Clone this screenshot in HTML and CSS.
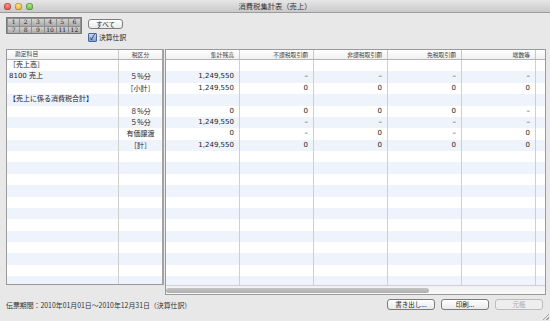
FILE: index.html
```html
<!DOCTYPE html>
<html lang="ja">

<head>
    <meta charset="UTF-8">
    <meta name="viewport" content="width=device-width, initial-scale=1.0">
    <title>消費税集計表（売上）</title>
    <link rel="stylesheet" href="styles.css">
</head>

<body>
    <div class="window">
        <div class="titlebar">
            <div class="lights">
                <span class="light red"></span>
                <span class="light yellow"></span>
                <span class="light green"></span>
            </div>
            <div class="title">消費税集計表（売上）</div>
        </div>

        <div class="toolbar">
            <div class="months">
                <span>1</span><span>2</span><span>3</span><span>4</span><span>5</span><span>6</span>
                <span>7</span><span>8</span><span>9</span><span>10</span><span>11</span><span>12</span>
            </div>
            <div class="side">
                <button class="btn small">すべて</button>
                <label class="check"><span class="box">✓</span>決算仕訳</label>
            </div>
        </div>

        <div class="tables">
            <div class="table left">
                <div class="head">
                    <div class="c account hl">勘定科目</div>
                    <div class="c tax center">税区分</div>
                </div>
                <div class="body" id="leftBody"></div>
            </div>
            <div class="table right">
                <div class="head">
                    <div class="c num">集計残高</div>
                    <div class="c num">不課税取引額</div>
                    <div class="c num">非課税取引額</div>
                    <div class="c num">免税取引額</div>
                    <div class="c num">端数等</div>
                    <div class="c filler"></div>
                </div>
                <div class="body" id="rightBody"></div>
                <div class="hscroll"><div class="thumb"></div></div>
            </div>
        </div>

        <div class="footer">
            <div class="period">伝票期間：2010年01月01日〜2010年12月31日（決算仕訳）</div>
            <div class="buttons">
                <button class="btn">書き出し...</button>
                <button class="btn">印刷...</button>
                <button class="btn disabled">元帳</button>
            </div>
        </div>
        <div class="grip"></div>
    </div>

    <script>
        var rows = [
            ['［売上高］', '', '', '', '', '', ''],
            ['8100 売上', '５%分', '1,249,550', '–', '–', '–', '–'],
            ['', '［小計］', '1,249,550', '0', '0', '0', '0'],
            ['【売上に係る消費税合計】', '', '', '', '', '', ''],
            ['', '８%分', '0', '0', '0', '0', '–'],
            ['', '５%分', '1,249,550', '–', '–', '–', '–'],
            ['', '有価譲渡', '0', '–', '0', '–', '0'],
            ['', '［計］', '1,249,550', '0', '0', '0', '0']
        ];

        var leftHTML = '';
        var rightHTML = '';
        for (var i = 0; i < 20; i++) {
            var r = rows[i] || ['', '', '', '', '', '', ''];
            var cls = i % 2 ? 'row odd' : 'row';
            leftHTML += `<div class="${cls}"><div class="c account">${r[0]}</div><div class="c tax center">${r[1]}</div></div>`;
            rightHTML += `<div class="${cls}">`;
            for (var j = 2; j < 7; j++) {
                rightHTML += `<div class="c num">${r[j]}</div>`;
            }
            rightHTML += `<div class="c filler"></div></div>`;
        }
        document.getElementById('leftBody').innerHTML = leftHTML;
        document.getElementById('rightBody').innerHTML = rightHTML;
    </script>
</body>

</html>
```

FILE: styles.css
```css
body {
    margin: 0;
    padding: 0;
    font-family: "DejaVu Sans", "Noto Sans CJK JP", sans-serif;
    color: #222;
}

.window {
    width: 550px;
    height: 321px;
    background-color: #e8e8e8;
    position: relative;
    overflow: hidden;
}

.titlebar {
    height: 12px;
    background: linear-gradient(#e6e6e6, #c9c9c9);
    border-bottom: 1px solid #9c9c9c;
    display: flex;
    align-items: center;
    position: relative;
}

.lights {
    display: flex;
    gap: 4px;
    padding-left: 4px;
}

.light {
    width: 7px;
    height: 7px;
    border-radius: 50%;
    box-shadow: inset 0 0 0 0.5px rgba(0, 0, 0, 0.35);
}

.red {
    background: radial-gradient(circle at 50% 35%, #ff8f86, #d6382c);
}

.yellow {
    background: radial-gradient(circle at 50% 35%, #ffe28a, #d8a11b);
}

.green {
    background: radial-gradient(circle at 50% 35%, #a9e98b, #4ea62f);
}

.title {
    position: absolute;
    left: 0;
    right: 0;
    text-align: center;
    font-family: "Noto Sans CJK JP", sans-serif;
    font-size: 7.3px;
    color: #333;
    line-height: 12px;
}

.toolbar {
    display: flex;
    gap: 6px;
    padding: 4px 0 0 6px;
    height: 30px;
}

.months {
    display: grid;
    grid-template-columns: repeat(6, 1fr);
    grid-template-rows: 1fr 1fr;
    width: 76px;
    height: 17px;
    padding: 1px;
    box-sizing: border-box;
    border: 1px solid #7a7a7a;
    background: #8e8e8e;
    gap: 1px;
}

.months span {
    background: linear-gradient(#d2d2d2, #aaaaaa);
    font-size: 6px;
    line-height: 6.5px;
    text-align: center;
    color: #222;
    font-family: "DejaVu Serif", serif;
}

.side {
    display: flex;
    flex-direction: column;
    gap: 3px;
    padding-top: 2px;
}

.btn {
    font-family: "Noto Sans CJK JP", sans-serif;
    font-size: 6.5px;
    height: 11px;
    width: 48px;
    padding: 0;
    border: 0.5px solid #7c7c7c;
    border-radius: 3px;
    background: linear-gradient(#ffffff, #e9e9e9);
    color: #222;
    line-height: 9px;
}

.btn.small {
    width: 35px;
    height: 10px;
}

.btn.disabled {
    color: #aaa;
    border-color: #bdbdbd;
    background: #eeeeee;
}

.check {
    display: flex;
    align-items: center;
    gap: 2px;
    font-family: "Noto Sans CJK JP", sans-serif;
    font-size: 6.8px;
}

.box {
    width: 7px;
    height: 7px;
    border: 0.5px solid #4c6791;
    background: linear-gradient(#c7d9f2, #7b9fd6);
    font-size: 8px;
    line-height: 6px;
    color: #0e1d3f;
    text-align: center;
    border-radius: 1px;
}

.tables {
    display: flex;
    gap: 1px;
    padding-left: 6px;
    margin-top: 2px;
    height: 246px;
    align-items: flex-start;
}

.table {
    background: #fff;
    border: 1px solid #9a9a9a;
    overflow: hidden;
}

.table.left {
    width: 155px;
    height: 234px;
    border-right: 2px solid #a3a3a3;
}

.table.right {
    width: 379px;
    height: 244px;
}

.head {
    display: flex;
    height: 9px;
    background: linear-gradient(#ffffff, #f0f0f0);
    border-bottom: 1px solid #b5b5b5;
    font-family: "Noto Sans CJK JP", sans-serif;
    color: #444;
}

.head .c {
    line-height: 9px;
    font-size: 5.8px;
    border-right: 1px solid #c8c8c8;
}

.body {
    height: 225px;
    overflow: hidden;
}

.row {
    display: flex;
    height: 11.375px;
    background: #fff;
}

.row.odd {
    background: #eef3fc;
}

.c {
    box-sizing: border-box;
    white-space: nowrap;
    overflow: hidden;
    font-size: 7px;
    line-height: 11.375px;
    font-family: "DejaVu Sans", "Noto Sans CJK JP", sans-serif;
}

.row .c {
    border-right: 1px solid #cfcfcf;
}

.account {
    width: 112px;
    padding-left: 2px;
}

.head .hl {
    padding-left: 8px;
}

.tax {
    width: 43px;
    font-family: "Noto Sans CJK JP", sans-serif;
}

.row .tax {
    border-right: none;
}

.head .tax {
    border-right: none;
}

.center {
    text-align: center;
}

.num {
    width: 74px;
    text-align: right;
    padding-right: 5px;
}

.head .num {
    font-family: "Noto Sans CJK JP", sans-serif;
}

.right .c.filler,
.right .head .filler {
    flex: 1;
    border-right: none;
}

.hscroll {
    height: 9px;
    background: linear-gradient(#f2f2f2, #fafafa);
    border-top: 1px solid #d0d0d0;
    display: flex;
    align-items: center;
}

.thumb {
    width: 263px;
    height: 5px;
    margin-left: 0;
    border-radius: 3px;
    background: linear-gradient(#c5c5c5, #aeaeae);
}

.footer {
    display: flex;
    justify-content: space-between;
    align-items: center;
    padding: 4px 7px 0 6px;
}

.period {
    font-family: "Noto Sans CJK JP", sans-serif;
    font-size: 6.9px;
    color: #333;
}

.buttons {
    display: flex;
    gap: 6px;
}

.grip {
    position: absolute;
    right: 1px;
    bottom: 1px;
    width: 8px;
    height: 8px;
    background: repeating-linear-gradient(135deg, transparent 0 1.5px, #a0a0a0 1.5px 2.5px);
    clip-path: polygon(100% 0, 100% 100%, 0 100%);
}
```
